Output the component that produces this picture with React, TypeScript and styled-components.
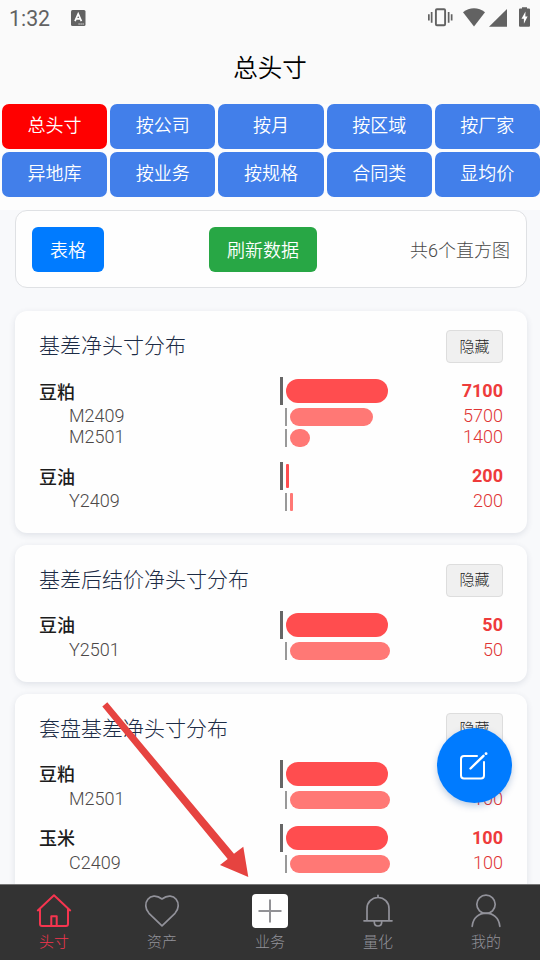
import React from "react";
import styled, { createGlobalStyle, css } from "styled-components";

const GlobalStyle = createGlobalStyle`
  * { box-sizing: border-box; }
  html, body { margin: 0; padding: 0; }
  body {
    font-family: Roboto, "Noto Sans CJK SC", sans-serif;
    font-weight: 300;
    overflow: hidden;
  }
  button { font: inherit; border: 0; margin: 0; padding: 0; }
  svg { display: block; }
`;

const Screen = styled.div`
  position: relative;
  width: 540px;
  height: 960px;
  display: flex;
  flex-direction: column;
  overflow: hidden;
  background: #f8f9fb;
`;

const Header = styled.header`
  flex: none;
  height: 104px;
  background: #fafafa;
`;

const StatusBar = styled.div`
  height: 36px;
  padding: 0 9px 0 9px;
  display: flex;
  align-items: center;
  color: #626262;
`;

const Clock = styled.span`
  font-size: 21.3px;
  line-height: 36px;
  padding-top: 1px;
  font-weight: 400;
  width: 62px;
`;

const StatusIcons = styled.div`
  margin-left: auto;
`;

const PageTitle = styled.h1`
  margin: 0;
  padding-top: 15px;
  height: 68px;
  text-align: center;
  font-size: 24.5px;
  line-height: 36px;
  font-weight: 350;
  color: #000;
`;

const TabGrid = styled.nav`
  flex: none;
  height: 106px;
  padding-left: 2px;
  background: #fdfdfd;
  display: grid;
  grid-template-columns: repeat(5, 105.2px);
  grid-auto-rows: 45px;
  gap: 3px;
`;

const Tab = styled.button<{ $active?: boolean }>`
  border-radius: 7px;
  background: ${(p) => (p.$active ? "#ff0000" : "#427fea")};
  color: #fff;
  font-size: 18px;
  line-height: 26px;
  padding-bottom: 2px;
  font-weight: 350;
`;

const Content = styled.main`
  flex: 1;
  min-height: 0;
  overflow: hidden;
  padding: 0 13px 0 15px;
  display: flex;
  flex-direction: column;
`;

const Toolbar = styled.section`
  flex: none;
  height: 78px;
  margin-bottom: 23px;
  padding: 0 16px;
  display: grid;
  grid-template-columns: 177px auto 1fr;
  align-items: center;
  justify-items: start;
  border: 1px solid #dfe1e4;
  border-radius: 12px;
  background: #fefefe;
`;

const ActionButton = styled.button<{ $color: string }>`
  height: 45px;
  padding: 0 18px 1px;
  border-radius: 6px;
  background: ${(p) => p.$color};
  color: #fff;
  font-size: 18px;
  font-weight: 350;
`;

const ChartCount = styled.span`
  justify-self: end;
  font-size: 18px;
  color: #484848;
`;

const Card = styled.section`
  flex: none;
  margin-bottom: 12px;
  padding: 19px 24px 21.6px;
  border-radius: 12px;
  background: #fefefe;
  box-shadow: 0 2px 6px rgba(40, 60, 90, 0.12);
`;

const CardHead = styled.div`
  height: 33px;
  margin-bottom: 14px;
  display: flex;
  justify-content: space-between;
`;

const CardTitle = styled.h2`
  margin: 0;
  font-size: 21px;
  line-height: 33px;
  font-weight: 300;
  color: #1c2b45;
`;

const HideButton = styled.button`
  width: 57px;
  height: 33px;
  border: 1px solid #ddd;
  border-radius: 4px;
  background: #f0f0f0;
  color: #222;
  font-size: 15px;
  line-height: 30px;
`;

const Group = styled.div`
  display: flex;
  flex-direction: column;
  gap: 3.2px;
  & + & { margin-top: 14.8px; }
`;

const Row = styled.div<{ $main?: boolean }>`
  display: grid;
  grid-template-columns: ${(p) => (p.$main ? "241px" : "30px 216px")} 1fr auto;
  align-items: center;
  height: ${(p) => (p.$main ? 28 : 18)}px;
  font-size: 18px;
  line-height: 18px;
`;

const Product = styled.span`
  font-weight: 500;
  color: #1c1c1c;
  padding-top: 3px;
`;

const Contract = styled.span`
  grid-column: 2;
  color: #4c4848;
  position: relative;
  top: -0.9px;
`;

const Track = styled.div<{ $main?: boolean }>`
  display: flex;
  align-items: center;
  height: 100%;
  gap: 3px;
  &::before {
    content: "";
    height: 100%;
    ${(p) =>
      p.$main
        ? css`width: 3px; background: #666;`
        : css`width: 2px; background: #999;`}
  }
`;

const Bar = styled.div<{ $main?: boolean }>`
  height: ${(p) => (p.$main ? 24 : 18)}px;
  border-radius: 12px;
  background: ${(p) => (p.$main ? "#ff4d4f" : "#ff7875")};
`;

const SmallBar = styled(Bar)`
  border-radius: 1px;
`;

const Amount = styled.span<{ $main?: boolean }>`
  color: ${(p) => (p.$main ? "#ee3b3b" : "#e03434")};
  font-weight: ${(p) => (p.$main ? 700 : 300)};
  position: relative;
  top: ${(p) => (p.$main ? "0" : "-0.9px")};
`;

const BottomNav = styled.nav`
  flex: none;
  height: 76px;
  border-top: 1px solid #777;
  background: #333;
  display: grid;
  grid-template-columns: repeat(5, 1fr);
`;

const NavItem = styled.div<{ $active?: boolean }>`
  display: flex;
  flex-direction: column;
  align-items: center;
  padding-top: 8px;
  color: ${(p) => (p.$active ? "#f5354f" : "#92929a")};
  font-size: 15px;
  line-height: 22px;
  gap: 2px;
`;

const Fab = styled.button`
  position: absolute;
  left: 437px;
  top: 728px;
  width: 75px;
  height: 75px;
  padding-right: 2px;
  border-radius: 50%;
  background: #007bff;
  box-shadow: 0 3px 7px rgba(0, 60, 140, 0.25);
  display: flex;
  align-items: center;
  justify-content: center;
`;

const Pointer = styled.svg`
  position: absolute;
  left: 100px;
  top: 700px;
`;

const tabs = ["总头寸", "按公司", "按月", "按区域", "按厂家", "异地库", "按业务", "按规格", "合同类", "显均价"];

type Entry = { name: string; value: number; width: number };
type GroupData = Entry & { items: Entry[] };

const charts: { title: string; groups: GroupData[] }[] = [
  {
    title: "基差净头寸分布",
    groups: [
      {
        name: "豆粕", value: 7100, width: 102,
        items: [
          { name: "M2409", value: 5700, width: 83 },
          { name: "M2501", value: 1400, width: 20 },
        ],
      },
      { name: "豆油", value: 200, width: 3, items: [{ name: "Y2409", value: 200, width: 3 }] },
    ],
  },
  {
    title: "基差后结价净头寸分布",
    groups: [{ name: "豆油", value: 50, width: 102, items: [{ name: "Y2501", value: 50, width: 100 }] }],
  },
  {
    title: "套盘基差净头寸分布",
    groups: [
      { name: "豆粕", value: 100, width: 102, items: [{ name: "M2501", value: 100, width: 100 }] },
      { name: "玉米", value: 100, width: 102, items: [{ name: "C2409", value: 100, width: 100 }] },
    ],
  },
];

function ValueBar({ width, main }: { width: number; main?: boolean }) {
  const Shape = width < 10 ? SmallBar : Bar;
  return (
    <Track $main={main}>
      <Shape $main={main} style={{ width }} />
    </Track>
  );
}

function ChartCard({ title, groups }: { title: string; groups: GroupData[] }) {
  return (
    <Card>
      <CardHead>
        <CardTitle>{title}</CardTitle>
        <HideButton>隐藏</HideButton>
      </CardHead>
      {groups.map((g) => (
        <Group key={g.name}>
          <Row $main>
            <Product>{g.name}</Product>
            <ValueBar main width={g.width} />
            <Amount $main>{g.value}</Amount>
          </Row>
          {g.items.map((item) => (
            <Row key={item.name}>
              <Contract>{item.name}</Contract>
              <ValueBar width={item.width} />
              <Amount>{item.value}</Amount>
            </Row>
          ))}
        </Group>
      ))}
    </Card>
  );
}

const KeyboardIcon = () => (
  <svg width="15" height="16" viewBox="0 0 15 16">
    <rect width="14.5" height="16" rx="1.5" fill="#626262" />
    <path d="M4 11.2 7.2 3.8l3.2 7.4M5.2 8.9h4" fill="none" stroke="#fff" strokeWidth="1.7" />
    <path d="M7.5 14h6" stroke="#fff" strokeWidth="1" strokeDasharray="1.2 .8" />
  </svg>
);

const SystemIcons = () => (
  <svg width="104" height="22" viewBox="427 7 104 22" fill="#626262">
    <rect x="435.9" y="9.3" width="9.2" height="16" rx="1" fill="none" stroke="#626262" strokeWidth="1.9" />
    <path d="M428 14.2h1.7v6.3H428zM430.8 12h1.7v10.8h-1.7zM447.8 12h1.7v10.8h-1.7zM450.8 14.2h1.7v6.3h-1.7z" />
    <path d="M474 26.5 463 12.3C469.5 6.8 478.500 6.800 485 12.300Z" />
    <path d="M507 9v17.800H489Z" />
    <path d="M522 8.500V7.200h5v1.300h2q1 0 1 1v16.300q0 1-1 1h-9q-1 0-1-1V9.500q0-1 1-1Z" />
    <path d="M525.500 11.500 521.500 18.700h2.400v5l3.700-7.200h-2.300Z" fill="#fff" />
  </svg>
);

const line = { fill: "none", stroke: "currentColor", strokeWidth: 1.7, strokeLinejoin: "round", strokeLinecap: "round" } as const;

const HomeIcon = () => (
  <svg width="36" height="36" viewBox="0 0 36 36" {...line} strokeWidth={2}>
    <path d="M1.800 17.400 18 2.300 34.200 17.400M4 15.600V31Q4 33 6 33H30Q32 33 32 31V15.600" />
    <path d="M15.300 33V23.200h5.400V33" />
  </svg>
);

const HeartIcon = () => (
  <svg width="36" height="36" viewBox="0 0 36 36" {...line}>
    <path d="M18 32.800 5 20.300C-3.500 11 6.200-3 18 6 29.800-3 39.500 11 31 20.300Z" />
  </svg>
);

const AddIcon = () => (
  <svg width="36" height="36" viewBox="0 0 36 36">
    <rect y="1" width="36" height="34" rx="4" fill="#fff" />
    <path d="M6.500 18h23M18 6.500v23" stroke="#929296" strokeWidth="2" />
  </svg>
);

const BellIcon = () => (
  <svg width="36" height="36" viewBox="0 0 36 36" {...line}>
    <path d="M18 2.300v2.200M7 27.500V15.500a11 11 0 0 1 22 0v12M4 27.800h28M14.300 29q0 4 3.700 4t3.700-4" />
  </svg>
);

const UserIcon = () => (
  <svg width="36" height="36" viewBox="0 0 36 36" {...line}>
    <circle cx="18" cy="11.300" r="9.200" />
    <path d="M4.200 33.300C5.700 15.800 30.300 15.800 31.800 33.300" />
  </svg>
);

const EditIcon = () => (
  <svg width="30" height="30" viewBox="0 0 30 30" fill="none" stroke="#fff" strokeWidth="2" strokeLinecap="round" strokeLinejoin="round">
    <path d="M18 5H5Q2 5 2 8V24.500Q2 27.500 5 27.500H22Q25 27.500 25 24.500V11" />
    <path d="M11.500 17.500 24.500 4.800" strokeWidth="2.400" />
    <path d="M27 2.700h.1" strokeWidth="2.800" />
  </svg>
);

const navItems = [
  { label: "头寸", Icon: HomeIcon, active: true },
  { label: "资产", Icon: HeartIcon },
  { label: "业务", Icon: AddIcon },
  { label: "量化", Icon: BellIcon },
  { label: "我的", Icon: UserIcon },
];

export default function App() {
  return (
    <Screen>
      <GlobalStyle />
      <Header>
        <StatusBar>
          <Clock>1:32</Clock>
          <KeyboardIcon />
          <StatusIcons>
            <SystemIcons />
          </StatusIcons>
        </StatusBar>
        <PageTitle>总头寸</PageTitle>
      </Header>
      <TabGrid>
        {tabs.map((t, i) => (
          <Tab key={t} $active={i === 0}>{t}</Tab>
        ))}
      </TabGrid>
      <Content>
        <Toolbar>
          <ActionButton $color="#007bff">表格</ActionButton>
          <ActionButton $color="#28a745">刷新数据</ActionButton>
          <ChartCount>共6个直方图</ChartCount>
        </Toolbar>
        {charts.map((c) => (
          <ChartCard key={c.title} {...c} />
        ))}
      </Content>
      <BottomNav>
        {navItems.map(({ label, Icon, active }) => (
          <NavItem key={label} $active={active}>
            <Icon />
            {label}
          </NavItem>
        ))}
      </BottomNav>
      <Fab aria-label="编辑">
        <EditIcon />
      </Fab>
      <Pointer width="150" height="180" viewBox="100 700 150 180">
        <path d="M107.300 702.300 234 853.700 243.300 846.700 248.300 877 220 865 227.700 859 102.300 706.500Z" fill="#e64340" />
      </Pointer>
    </Screen>
  );
}
